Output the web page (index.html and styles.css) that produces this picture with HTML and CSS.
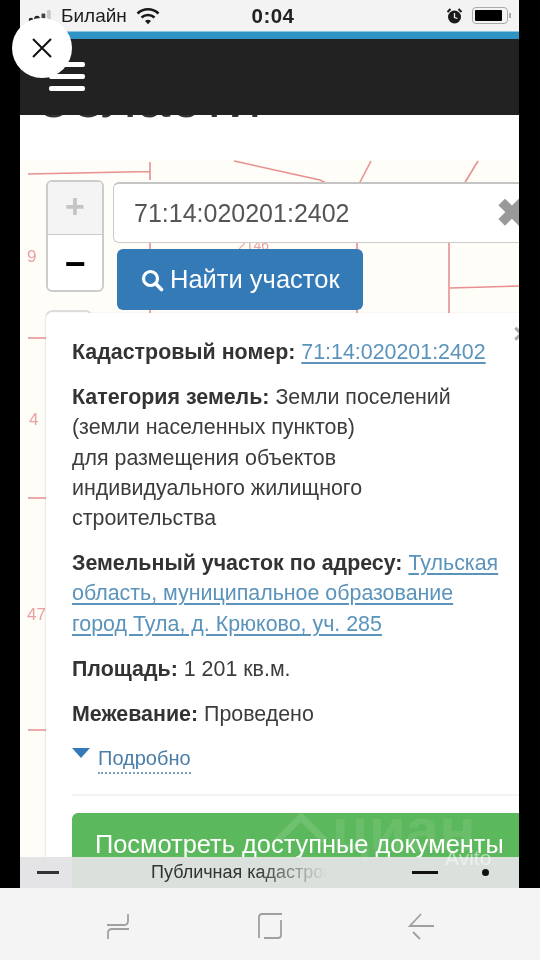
FILE: index.html
```html
<!DOCTYPE html>
<html lang="ru">
<head>
<meta charset="utf-8">
<title>Публичная кадастровая карта</title>
<link rel="stylesheet" href="styles.css">
</head>
<body>
<div class="device">
  <main class="screen">
    <header class="status">
      <div class="status-left">
        <svg class="signal" width="28" height="14" viewBox="0 0 28 14"><circle cx="3" cy="11" r="2.300" fill="#222"/><circle cx="9" cy="9.500" r="2.800" fill="#222"/><rect x="13.500" y="4.500" width="3.800" height="8.500" rx="1" fill="#444"/><rect x="19" y="1" width="3.800" height="12" rx="1" fill="#c9c9c9"/></svg>
        <span class="carrier">Билайн</span>
        <svg class="wifi" width="24" height="18" viewBox="0 0 24 18"><path d="M1.500 6.500a15 15 0 0 1 21 0" fill="none" stroke="#1a1a1a" stroke-width="2.600"/><path d="M5.500 10.500a9.500 9.500 0 0 1 13 0" fill="none" stroke="#1a1a1a" stroke-width="2.600"/><path d="M9 14a4.500 4.500 0 0 1 6 0l-3 3.200z" fill="#1a1a1a"/></svg>
      </div>
      <span class="clock">0:04</span>
      <div class="status-right">
        <svg width="17" height="18" viewBox="0 0 17 18"><circle cx="8.500" cy="10" r="6.500" fill="#1a1a1a"/><path d="M8.500 6v4.500l3 1" fill="none" stroke="#eee" stroke-width="1.300"/><path d="M1.500 5 4.500 2M15.500 5l-3-3" stroke="#1a1a1a" stroke-width="2"/></svg>
        <div class="battery"><div class="battery-fill"></div></div>
        <div class="battery-tip"></div>
      </div>
    </header>
    <div class="stripe"></div>
    <nav class="topbar">
      <div class="burger"><i></i><i></i><i></i></div>
    </nav>
    <div class="heading-clip"><h1>области</h1></div>
    <section class="map">
      <svg class="map-art" viewBox="20 160 499 728" width="499" height="728">
        <g fill="none" stroke="#e88f90" stroke-width="1.600">
          <path d="M28 174 150 171.500M150 162v18M234 161 320 180 340 190M371 161 359 184M478 161 464 184"/>
          <path d="M150 243v8M357 243v8M449 243v72M450 288 519 286M150 310v6M357 310v6"/>
          <path d="M28 338h20M28 498h20M28 730h20"/>
        </g>
        <g class="map-labels">
          <text x="27" y="262">9</text>
          <text x="29" y="425">4</text>
          <text x="27" y="620">47</text>
          <text x="238" y="250" class="map-label-small">2146</text>
        </g>
      </svg>
      <div class="controls">
        <div class="zoom">
          <div class="zoom-in">+</div>
          <div class="zoom-out">−</div>
        </div>
        <div class="search">
          <div class="field">
            <span>71:14:020201:2402</span>
            <span class="clear">✖</span>
          </div>
          <button class="find">
            <svg width="24" height="24" viewBox="0 0 24 24"><circle cx="10.500" cy="10.500" r="7" fill="none" stroke="#fff" stroke-width="3.200"/><path d="m15.500 15.500 6 6" stroke="#fff" stroke-width="3.600" stroke-linecap="round"/></svg>
            Найти участок
          </button>
        </div>
      </div>
      <div class="layer-btn"></div>
      <article class="popup">
        <span class="popup-close">×</span>
        <p><b>Кадастровый номер:</b> <a href="#">71:14:020201:2402</a></p>
        <p><b>Категория земель:</b> Земли поселений<br>(земли населенных пунктов)<br>для размещения объектов<br>индивидуального жилищного<br>строительства</p>
        <p><b>Земельный участок по адресу:</b> <a href="#">Тульская<br>область, муниципальное образование<br>город Тула, д. Крюково, уч. 285</a></p>
        <p><b>Площадь:</b> 1 201 кв.м.</p>
        <p><b>Межевание:</b> Проведено</p>
        <div class="more"><span class="tri"></span><span class="more-link">Подробно</span></div>
        <hr class="rule">
        <div class="docs">Посмотреть доступные документы</div>
      </article>
      <div class="toolbar">
        <span class="tool-dash"></span>
        <span class="tool-title">Публичная кадастровая карта</span>
        <span class="tool-line"></span>
        <span class="tool-dot"></span>
      </div>
      <svg class="wm-house" width="52" height="30" viewBox="0 0 52 30"><path d="M2 28 26 4l24 24" fill="none" stroke="#fff" stroke-opacity="0.12" stroke-width="7"/></svg>
      <div class="wm-cian">циан</div>
      <div class="wm-avito">Avito</div>
    </section>
  </main>
  <footer class="softkeys">
    <svg width="26" height="28" viewBox="0 0 26 28"><path d="M2 13h17q4 0 4-4V2M24 17H7q-4 0-4 4v6" fill="none" stroke="#a0a0a0" stroke-width="1.800"/></svg>
    <svg width="26" height="28" viewBox="0 0 26 28"><path d="M25 2H5Q2 2 2 5v21M24 8v15q0 3-3 3H7" fill="none" stroke="#a0a0a0" stroke-width="1.800"/></svg>
    <svg width="26" height="28" viewBox="0 0 26 28"><path d="M13 2 2 14h24M5 20l7 7" fill="none" stroke="#a0a0a0" stroke-width="1.800"/></svg>
  </footer>
  <button class="close-overlay" aria-label="Закрыть">
    <svg width="24" height="24" viewBox="0 0 24 24"><path d="M3 3l18 18M21 3 3 21" stroke="#111" stroke-width="2"/></svg>
  </button>
</div>
</body>
</html>
```

FILE: styles.css
```css
* { box-sizing: border-box; }
html, body { margin: 0; padding: 0; }
body {
  width: 540px;
  height: 960px;
  overflow: hidden;
  background: #000;
  font-family: "Liberation Sans", Arial, sans-serif;
}
.device {
  position: relative;
  display: flex;
  flex-direction: column;
  width: 540px;
  height: 960px;
}
.screen {
  position: relative;
  display: flex;
  flex-direction: column;
  width: 499px;
  height: 888px;
  margin-left: 20px;
  overflow: hidden;
  background: #fff;
  filter: blur(0.6px);
}
.status {
  display: flex;
  align-items: center;
  justify-content: space-between;
  height: 31px;
  padding: 0 8px;
  background: #f3f3f3;
  color: #1c1c1c;
  flex: none;
}
.status-left, .status-right { display: flex; align-items: center; width: 150px; }
.status-right { justify-content: flex-end; }
.carrier { font-size: 19px; margin: 0 9px 0 5px; }
.clock { margin-left: 7px; font-size: 20.500px; font-weight: 700; color: #222; letter-spacing: 0.5px; }
.battery {
  width: 36px;
  height: 17px;
  margin-left: 9px;
  padding: 2px;
  border: 1px solid #aaa;
  border-radius: 4px;
}
.battery-fill { width: 27px; height: 100%; background: #000; border-radius: 1px; }
.battery-tip { width: 2px; height: 5px; margin-left: 1px; background: #aaa; }
.stripe {
  flex: none;
  height: 8px;
  background: #2f94c3;
  border-top: 1px solid #8dc6de;
}
.topbar {
  flex: none;
  height: 76px;
  padding: 23px 0 0 29px;
  background: #222;
  position: relative;
  z-index: 2;
}
.burger { display: flex; flex-direction: column; gap: 7px; width: 36px; }
.burger i { display: block; height: 5px; background: #fff; border-radius: 2px; }
.heading-clip { flex: none; height: 45px; overflow: hidden; }
.heading-clip h1 {
  margin: -43px 0 0 17px;
  font-size: 60px;
  line-height: 50px;
  font-weight: 400;
  color: #333;
}
.map {
  position: relative;
  flex: 1;
  min-height: 0;
  overflow: hidden;
  background: #fffdf8;
}
.map-art { position: absolute; left: 0; top: 0; }
.map-labels { font-family: "Liberation Sans", Arial, sans-serif; font-size: 17px; fill: #e9a0a0; }
.map-label-small { font-size: 14px; }
.controls {
  position: relative;
  display: flex;
  align-items: flex-start;
  width: 560px;
  padding: 20px 0 0 26px;
}
.zoom {
  flex: none;
  width: 58px;
  height: 112px;
  border: 2px solid #ccc;
  border-radius: 6px;
  overflow: hidden;
  background: #fff;
  text-align: center;
}
.zoom-in {
  height: 53px;
  background: #f4f4f4;
  border-bottom: 1px solid #ccc;
  color: #c4c4c4;
  font-size: 34px;
  font-weight: 700;
  line-height: 48px;
}
.zoom-out { color: #000; font-size: 36px; font-weight: 700; line-height: 58px; }
.search { flex: 1; margin-left: 9px; padding-top: 2px; }
.field {
  display: flex;
  justify-content: space-between;
  align-items: center;
  width: 420px;
  height: 61px;
  padding-left: 20px;
  background: #fff;
  border: 1px solid #ccc;
  border-top: 2px solid #c4c4c4;
  border-radius: 6px;
  font-size: 25px;
  color: #555;
}
.clear { color: #999; font-size: 38px; font-weight: 700; margin-right: 4px; }
.find {
  display: flex;
  align-items: center;
  gap: 6px;
  width: 246px;
  height: 61px;
  margin: 6px 0 0 4px;
  padding: 0 0 0 23px;
  border: 0;
  border-radius: 6px;
  background: #337ab7;
  color: #fff;
  font: 25.500px "Liberation Sans", Arial, sans-serif;
  white-space: nowrap;
}
.layer-btn {
  position: absolute;
  left: 26px;
  top: 150px;
  width: 46px;
  height: 50px;
  background: #fff;
  border: 2px solid #ddd;
  border-radius: 6px;
}
.popup {
  position: relative;
  width: 540px;
  margin: 3px 0 0 26px;
  padding: 24px 0 0 26px;
  background: #fff;
  border-top-left-radius: 5px;
  box-shadow: -1px 0 2px rgba(0, 0, 0, 0.09);
  font-size: 21.400px;
  line-height: 30.300px;
  color: #3c3c3c;
}
.popup p { margin: 0 0 14.700px; white-space: nowrap; }
.popup b { color: #333; }
.popup a { color: #5a93bb; text-decoration: underline; text-underline-offset: 3px; }
.popup-close {
  position: absolute;
  left: 467px;
  top: 6px;
  color: #aaa;
  font-size: 28px;
  font-weight: 700;
}
.more { display: flex; align-items: flex-start; gap: 8px; margin-top: -2px; }
.tri {
  width: 0;
  height: 0;
  margin-top: 6px;
  border-left: 9px solid transparent;
  border-right: 9px solid transparent;
  border-top: 10px solid #337ab7;
}
.more-link {
  color: #4a7ea8;
  border-bottom: 2px dotted #7d9fbc;
  font-size: 20px;
  line-height: 27px;
  margin-top: 3px;
}
.rule { margin: 20px 0 17px; border: 0; border-top: 2px solid #f4f4f4; }
.docs {
  width: 460px;
  height: 90px;
  padding: 16px 0 0 23px;
  background: #5cb85c;
  border-radius: 6px;
  color: #fff;
  font-size: 25.400px;
  line-height: 30px;
  white-space: nowrap;
}
.toolbar {
  position: absolute;
  left: 0;
  right: 0;
  bottom: 0;
  display: flex;
  align-items: center;
  height: 31px;
  padding-left: 17px;
  background: rgba(226, 226, 228, 0.94);
}
.tool-dash { flex: none; width: 22px; height: 3px; background: #333; }
.tool-title {
  flex: none;
  width: 176px;
  margin-left: 92px;
  overflow: hidden;
  white-space: nowrap;
  font-size: 18px;
  color: #333;
  -webkit-mask-image: linear-gradient(to right, #000 60%, transparent 100%);
  mask-image: linear-gradient(to right, #000 60%, transparent 100%);
}
.tool-line { flex: none; width: 26px; height: 3px; margin-left: 85px; background: #111; }
.tool-dot { flex: none; width: 7px; height: 7px; margin-left: 44px; border-radius: 50%; background: #111; }
.wm-house { position: absolute; left: 255px; top: 653px; }
.wm-cian {
  position: absolute;
  left: 312px;
  top: 640px;
  font-size: 60px;
  font-weight: 700;
  line-height: 60px;
  color: rgba(255, 255, 255, 0.09);
}
.wm-avito {
  position: absolute;
  left: 425px;
  top: 686px;
  font-size: 21px;
  color: rgba(255, 255, 255, 0.5);
}
.softkeys {
  flex: none;
  display: flex;
  justify-content: space-between;
  align-items: center;
  height: 72px;
  padding: 3px 106px 0 105px;
  background: #f4f4f4;
}
.close-overlay {
  position: absolute;
  left: 12px;
  top: 18px;
  display: flex;
  align-items: center;
  justify-content: center;
  width: 60px;
  height: 60px;
  padding: 0;
  border: 0;
  border-radius: 50%;
  background: #fff;
}
```
